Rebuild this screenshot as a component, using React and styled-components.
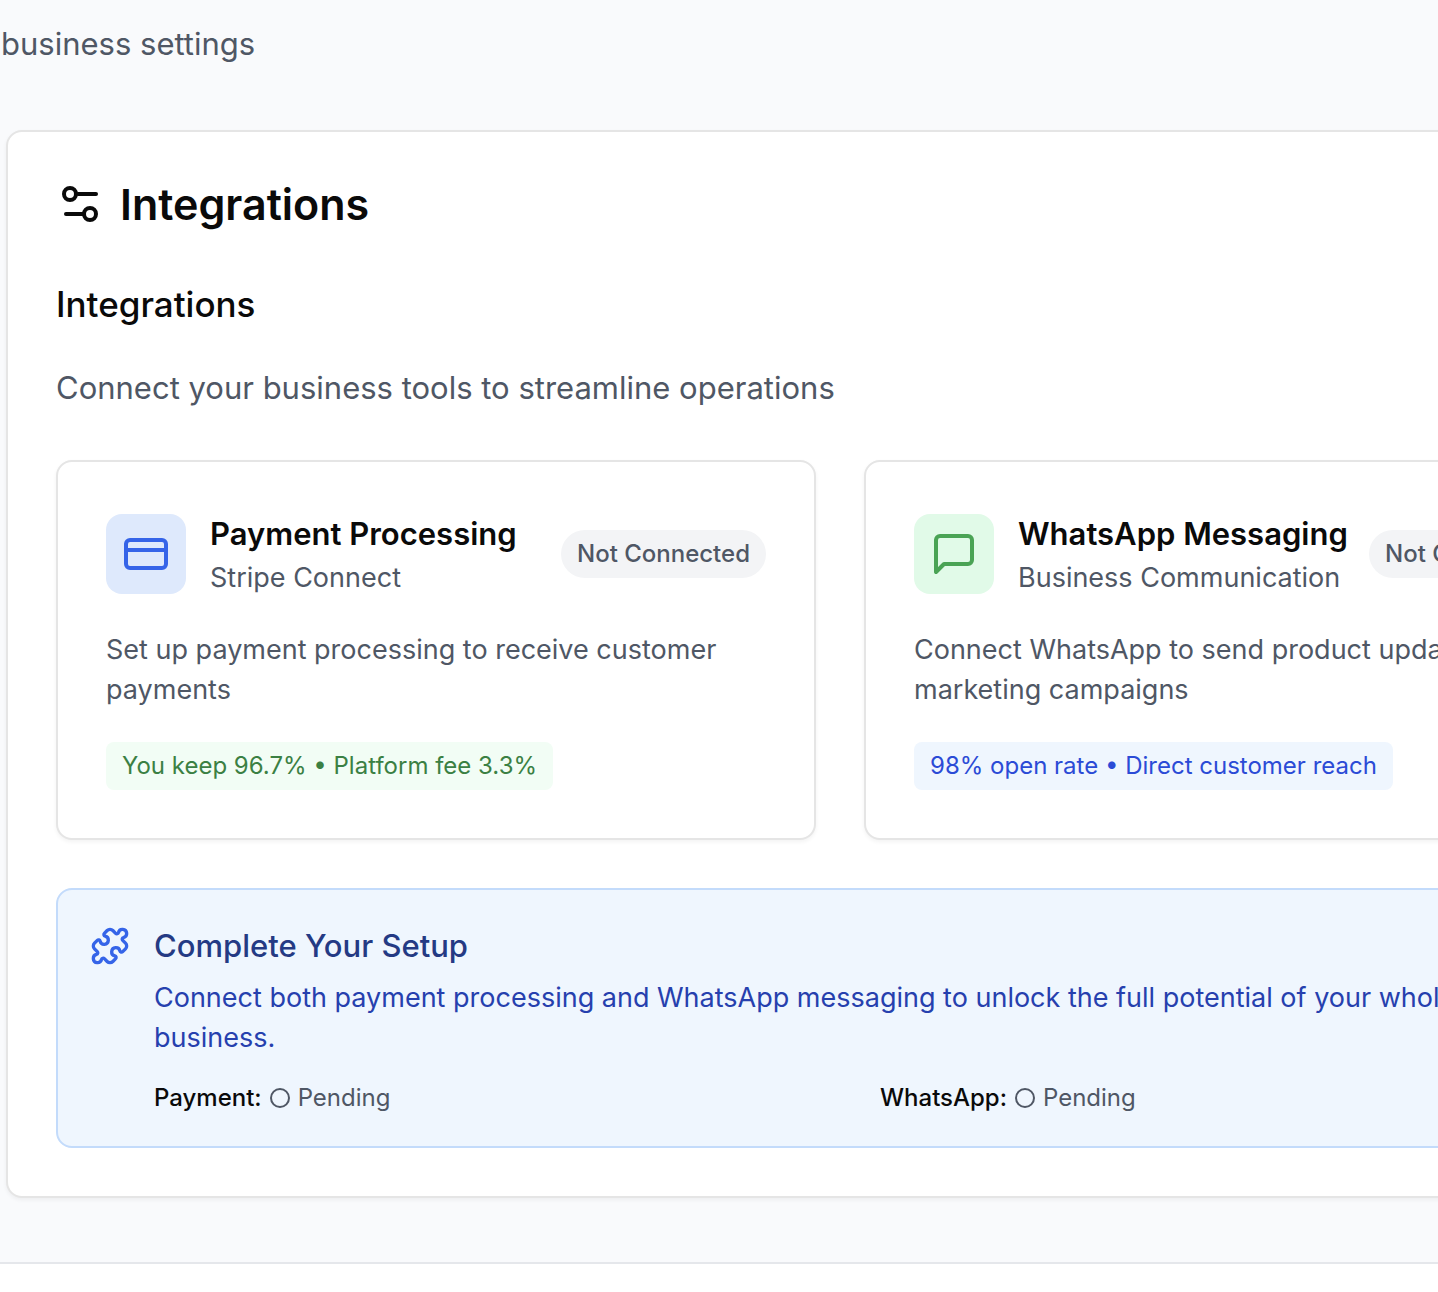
import React from "react";
import styled, { createGlobalStyle } from "styled-components";
import { CreditCard, Puzzle } from "lucide-react";

const Global = createGlobalStyle`
  * { box-sizing: border-box; }
  body {
    margin: 0;
    background: #ffffff;
    color: #0a0a0a;
    font-family: Inter, "Liberation Sans", sans-serif;
    -webkit-font-smoothing: antialiased;
  }
  h1, h2, h3, p { margin: 0; }
`;

const Viewport = styled.div`
  overflow: hidden;
  min-height: 100vh;
`;

const Page = styled.main`
  padding: 20px 0 64px 6px;
  background: #f9fafc;
  border-bottom: 2px solid #e5e7eb;
`;

const Intro = styled.p`
  margin-left: -5px;
  margin-bottom: 62px;
  font-size: 31px;
  line-height: 48px;
  color: #4f5765;
`;

const Panel = styled.section`
  display: flex;
  flex-direction: column;
  gap: 48px;
  width: calc(100% + 236px);
  padding: 48px;
  border: 2px solid #e5e5e5;
  border-radius: 16px;
  background: #ffffff;
  box-shadow: 0 2px 4px rgba(0, 0, 0, 0.05);
`;

const PanelTitle = styled.h1`
  display: flex;
  align-items: center;
  gap: 16px;
  font-size: 43px;
  line-height: 48px;
  font-weight: 600;
`;

const Heading = styled.div`
  display: flex;
  flex-direction: column;
  gap: 32px;
`;

const SectionTitle = styled.h2`
  font-size: 35px;
  line-height: 56px;
  font-weight: 500;
`;

const Lead = styled.p`
  font-size: 31px;
  line-height: 48px;
  color: #4f5765;
`;

const Cards = styled.div`
  display: grid;
  grid-template-columns: 1fr 1fr;
  gap: 48px;
`;

const Card = styled.article`
  display: flex;
  flex-direction: column;
  align-items: flex-start;
  gap: 32px;
  padding: 48px;
  border: 2px solid #e5e5e5;
  border-radius: 16px;
  background: #ffffff;
  box-shadow: 0 2px 4px rgba(0, 0, 0, 0.05);
`;

const CardHeader = styled.header`
  display: flex;
  align-items: center;
  justify-content: space-between;
  align-self: stretch;
`;

const Identity = styled.div`
  display: flex;
  align-items: center;
  gap: 24px;
`;

const IconTile = styled.span`
  display: grid;
  place-items: center;
  width: 80px;
  height: 80px;
  border-radius: 16px;
  background: ${(p) => (p.$tone === "blue" ? "#dee9fc" : "#e1fae8")};
  color: ${(p) => (p.$tone === "blue" ? "#3564e8" : "#4aa355")};
`;

const CardTitle = styled.h3`
  font-size: 31px;
  line-height: 48px;
  font-weight: 600;
`;

const Body = styled.p`
  font-size: 27px;
  line-height: 40px;
  color: ${(p) => (p.$blue ? "#2640ae" : "#4f5765")};
`;

const Badge = styled.span`
  padding: 8px 16px;
  border-radius: 24px;
  background: #f3f4f6;
  color: #4f5765;
  font-size: 24px;
  line-height: 32px;
  font-weight: 500;
  white-space: nowrap;
`;

const Tag = styled.span`
  padding: 8px 16px;
  border-radius: 8px;
  font-size: 24px;
  line-height: 32px;
  background: ${(p) => (p.$tone === "blue" ? "#eff6fe" : "#f2fdf5")};
  color: ${(p) => (p.$tone === "blue" ? "#2b4bd6" : "#3b8043")};
`;

const Setup = styled.section`
  display: flex;
  gap: 24px;
  padding: 32px;
  border: 2px solid #c3dbfb;
  border-radius: 16px;
  background: #eff6fe;
`;

const SetupIcon = styled.span`
  flex: none;
  height: 40px;
  margin-top: 4px;
  color: #3564e8;
`;

const SetupContent = styled.div`
  flex: 1;
`;

const SetupTitle = styled.h3`
  margin-bottom: 8px;
  font-size: 31px;
  line-height: 48px;
  font-weight: 500;
  color: #243a84;
`;

const Statuses = styled.div`
  display: grid;
  grid-template-columns: 1fr 1fr;
  gap: 16px;
  margin-top: 24px;
`;

const Status = styled.div`
  display: flex;
  align-items: center;
  gap: 8px;
  font-size: 24px;
  line-height: 32px;
  color: #4f5765;
`;

const StatusName = styled.span`
  font-weight: 500;
  color: #0a0a0a;
`;

const Ring = styled.span`
  width: 20px;
  height: 20px;
  border: 2px solid currentColor;
  border-radius: 50%;
`;

const StrokeIcon = styled.svg.attrs({ viewBox: "0 0 24 24", "aria-hidden": true })`
  width: 48px;
  height: 48px;
  fill: none;
  stroke: currentColor;
  stroke-width: 2;
  stroke-linecap: round;
  stroke-linejoin: round;
`;

const SlidersIcon = () => (
  <StrokeIcon>
    <path d="M20 7h-9" />
    <path d="M14 17H5" />
    <circle cx="17" cy="17" r="3" />
    <circle cx="7" cy="7" r="3" />
  </StrokeIcon>
);

const MessageIcon = () => (
  <StrokeIcon>
    <path d="M21 15a2 2 0 0 1-2 2H7l-4 4V5a2 2 0 0 1 2-2h14a2 2 0 0 1 2 2z" />
  </StrokeIcon>
);

const integrations = [
  {
    tone: "blue",
    Icon: CreditCard,
    name: "Payment Processing",
    kind: "Stripe Connect",
    text: "Set up payment processing to receive customer payments",
    tag: "You keep 96.7% • Platform fee 3.3%",
    tagTone: "green",
  },
  {
    tone: "green",
    Icon: MessageIcon,
    name: "WhatsApp Messaging",
    kind: "Business Communication",
    text: "Connect WhatsApp to send product updates and marketing campaigns",
    tag: "98% open rate • Direct customer reach",
    tagTone: "blue",
  },
];

export default function App() {
  return (
    <Viewport>
      <Global />
      <Page>
        <Intro>business settings</Intro>
        <Panel>
          <PanelTitle>
            <SlidersIcon />
            Integrations
          </PanelTitle>
          <Heading>
            <SectionTitle>Integrations</SectionTitle>
            <Lead>Connect your business tools to streamline operations</Lead>
          </Heading>
          <Cards>
            {integrations.map(({ tone, Icon, name, kind, text, tag, tagTone }) => (
              <Card key={name}>
                <CardHeader>
                  <Identity>
                    <IconTile $tone={tone}>
                      <Icon size={48} />
                    </IconTile>
                    <div>
                      <CardTitle>{name}</CardTitle>
                      <Body>{kind}</Body>
                    </div>
                  </Identity>
                  <Badge>Not Connected</Badge>
                </CardHeader>
                <Body>{text}</Body>
                <Tag $tone={tagTone}>{tag}</Tag>
              </Card>
            ))}
          </Cards>
          <Setup>
            <SetupIcon>
              <Puzzle size={40} />
            </SetupIcon>
            <SetupContent>
              <SetupTitle>Complete Your Setup</SetupTitle>
              <Body $blue>
                Connect both payment processing and WhatsApp messaging to unlock
                the full potential of your wholesale business.
              </Body>
              <Statuses>
                {["Payment:", "WhatsApp:"].map((name) => (
                  <Status key={name}>
                    <StatusName>{name}</StatusName>
                    <Ring />
                    <span>Pending</span>
                  </Status>
                ))}
              </Statuses>
            </SetupContent>
          </Setup>
        </Panel>
      </Page>
    </Viewport>
  );
}
